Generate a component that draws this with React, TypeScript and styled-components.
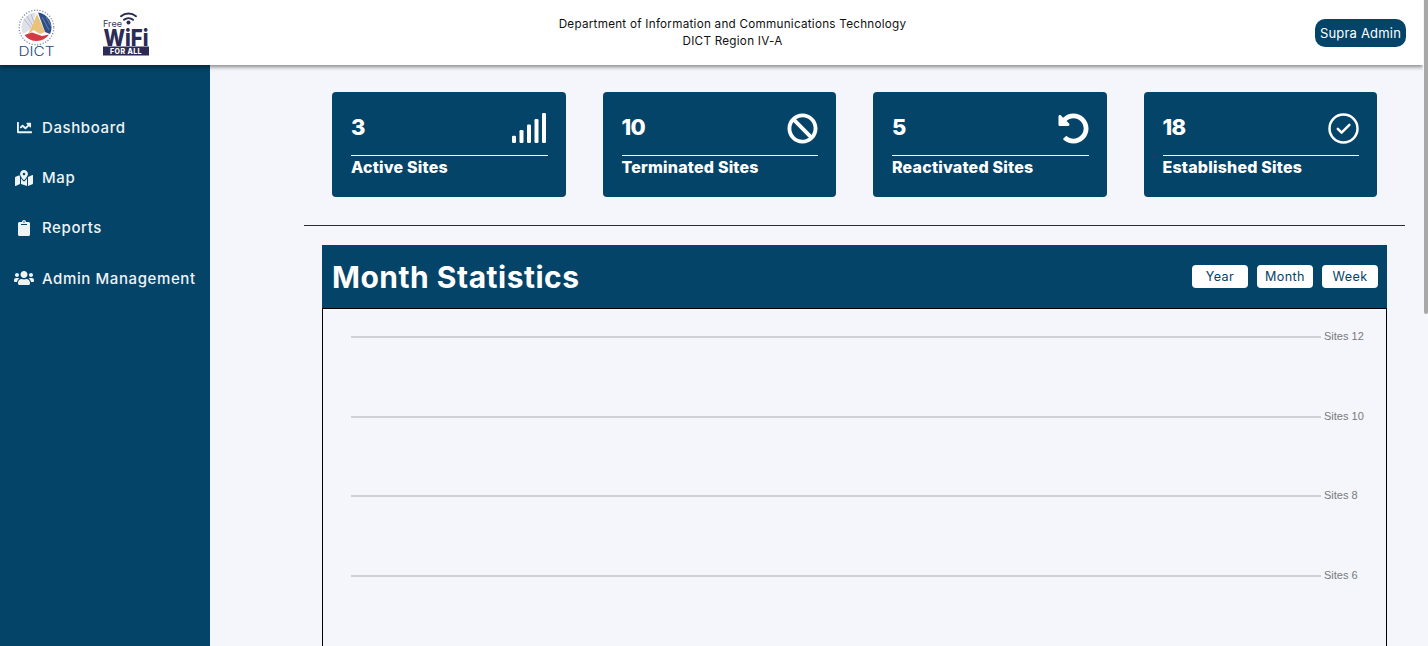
import { ReactNode } from "react";
import styled, { createGlobalStyle } from "styled-components";
import { FaBan, FaChartLine, FaClipboard, FaMapMarkedAlt, FaUndoAlt, FaUsers } from "react-icons/fa";

const navy = "#044468";
const pageBg = "#f4f6fb";

const GlobalStyle = createGlobalStyle`
  html, body {
    margin: 0;
    padding: 0;
    height: 100%;
    overflow: hidden;
    background: ${pageBg};
    font-family: "Inter", "Liberation Sans", sans-serif;
  }
  #root { height: 100%; }
  * { box-sizing: border-box; }
`;

const Viewport = styled.div`
  height: 646px;
  display: flex;
`;

const Page = styled.div`
  flex: 1;
  min-width: 0;
  overflow: hidden;
`;

const ScrollRail = styled.div`
  width: 5px;
  flex-shrink: 0;
  background: ${pageBg};
`;

const ScrollThumb = styled.div`
  height: 314px;
  margin-left: 1px;
  background: #a8a8a8;
  border-radius: 0 0 3px 3px;
`;

const Header = styled.header`
  position: relative;
  z-index: 2;
  height: 65px;
  background: #fff;
  box-shadow: 0 2px 4px rgba(0, 0, 0, 0.45);
  display: flex;
  align-items: center;
  justify-content: space-between;
  padding: 0 17px 0 18px;
`;

const Logos = styled.div`
  display: flex;
  align-items: center;
  gap: 47px;
`;

const HeaderTitle = styled.div`
  font-size: 11.7px;
  letter-spacing: 0.25px;
  line-height: 17px;
  text-align: center;
  color: #111;
`;

const UserBadge = styled.div`
  background: ${navy};
  color: #fff;
  font-size: 13px;
  letter-spacing: 0.2px;
  height: 28px;
  padding: 0 4px;
  width: 91px;
  justify-content: center;
  border-radius: 10px;
  display: flex;
  align-items: center;
`;

const Body = styled.div`
  display: flex;
  align-items: stretch;
`;

const Sidebar = styled.nav`
  width: 210px;
  flex-shrink: 0;
  background: ${navy};
  padding-top: 37px;
  display: flex;
  flex-direction: column;
`;

const NavItem = styled.a`
  height: 50.4px;
  display: flex;
  align-items: center;
  gap: 9px;
  padding-left: 15px;
  color: #eef3f6;
  font-size: 15px;
  letter-spacing: 0.6px;
  font-weight: 500;
`;

const NavIcon = styled.span<{ $size: number }>`
  width: 18px;
  flex-shrink: 0;
  display: flex;
  justify-content: center;

  svg {
    width: ${(p) => p.$size}px;
    height: ${(p) => p.$size}px;
    flex-shrink: 0;
  }
`;

const Main = styled.main`
  flex: 1;
  min-width: 0;
  padding: 27px 18px 0 94px;
`;

const Cards = styled.section`
  display: grid;
  grid-template-columns: repeat(4, 1fr);
  gap: 37px;
  padding: 0 28px;
`;

const Card = styled.article`
  height: 105px;
  background: ${navy};
  border-radius: 4px;
  color: #fff;
  padding: 19px 18px 0 19px;
`;

const CardTop = styled.div`
  height: 45px;
  display: flex;
  justify-content: space-between;
  align-items: flex-start;
  border-bottom: 1px solid #fff;
  padding-top: 1px;
`;

const CardValue = styled.div`
  font-size: 22px;
  font-weight: 800;
  letter-spacing: -0.8px;
  line-height: 30px;
`;

const CardIcon = styled.div`
  width: 31px;
  height: 31px;
  margin-top: 1px;

  svg { width: 100%; height: 100%; display: block; }
`;

const CardLabel = styled.div`
  font-size: 16px;
  font-weight: 800;
  letter-spacing: 0.2px;
  line-height: 22px;
`;

const Divider = styled.hr`
  border: 0;
  height: 1px;
  background: #2b2d36;
  margin: 28px 0 19px;
`;

const Panel = styled.section`
  margin: 0 18px;
`;

const PanelHead = styled.div`
  height: 63px;
  background: ${navy};
  display: flex;
  align-items: center;
  justify-content: space-between;
  padding: 0 9px 0 10px;
`;

const PanelTitle = styled.h2`
  margin: 0;
  color: #fff;
  font-size: 30px;
  letter-spacing: 0.5px;
  font-weight: 700;
`;

const RangeGroup = styled.div`
  display: flex;
  gap: 9px;
`;

const RangeButton = styled.button`
  width: 56px;
  height: 23px;
  padding: 0;
  border: 0;
  border-radius: 4px;
  background: #fff;
  color: ${navy};
  font-family: inherit;
  font-size: 12.6px;
  letter-spacing: 0.4px;
`;

const ChartBox = styled.div`
  height: 700px;
  border: 1px solid #000;
  padding: 27px 21px 0 28px;
`;

const GridRow = styled.div`
  height: 79.7px;
  display: flex;
  align-items: flex-start;
  gap: 3px;
`;

const GridLine = styled.div`
  flex: 1;
  height: 2px;
  background: #cfd1d6;
`;

const GridLabel = styled.span`
  width: 41px;
  margin-top: -6px;
  font-family: "Liberation Sans", Arial, sans-serif;
  font-size: 11px;
  line-height: 13px;
  color: #77797d;
`;

const SignalIcon = () => (
  <svg viewBox="0 0 31 31" fill="#fff" style={{ overflow: "visible" }}>
    <rect x="-5" y="22.7" width="4" height="7.3" rx="1.2" />
    <rect x="2.5" y="17" width="4" height="13" rx="1.2" />
    <rect x="10" y="11.4" width="4" height="18.6" rx="1.2" />
    <rect x="17.5" y="6" width="4" height="24" rx="1.2" />
    <rect x="25" y="0" width="4" height="30" rx="1.2" />
  </svg>
);

const CheckCircleIcon = () => (
  <svg viewBox="0 0 31 31" fill="none" stroke="#fff" strokeWidth="2.5" strokeLinecap="round" strokeLinejoin="round">
    <circle cx="15.5" cy="15.5" r="14" />
    <path d="M9.8 15.8 L13.6 19.6 L21.4 11.8" />
  </svg>
);

const DictLogo = () => (
  <svg width="38" height="48" viewBox="0 0 38 48" style={{ display: "block" }}>
    <circle cx="18.5" cy="18.5" r="17.3" fill="#fff" stroke="#8c93ad" strokeWidth="1.4" strokeDasharray="1.2 1.6" />
    <path d="M18 3.5 A15 15 0 0 0 5 25 L13 20 Z" fill="#dfe1e8" />
    <path d="M6 10 L15 21 M9 7 L16 19 M13 5 L17 16" stroke="#a9afc4" strokeWidth="0.8" />
    <path d="M20 3.5 A15 15 0 0 1 32 25 L27 23 Z" fill="#2e4f86" />
    <path d="M24 8 L31 21 M28 8 L33 17" stroke="#7f95bb" strokeWidth="0.7" />
    <path d="M19 5 L27 23 L22 25 L15.5 21 L9.5 26 L14 17 Z" fill="#e9c27c" />
    <path d="M6.5 26 L14 23.5 L24 27 L31 25.5 A15 15 0 0 1 6.5 26 Z" fill="#d23b45" />
    <text x="18.5" y="46.5" textAnchor="middle" fontFamily="Inter, sans-serif" fontSize="12.5" fontWeight="300" textLength="36" lengthAdjust="spacingAndGlyphs" fill="#2a4a80">DICT</text>
  </svg>
);

const WifiLogo = () => (
  <svg width="47" height="46" viewBox="0 0 47 46" style={{ display: "block", overflow: "visible" }}>
    <g fill="none" stroke="#2b2b55" strokeWidth="2" strokeLinecap="round">
      <path d="M18 6.2 A12 12 0 0 1 33 6.2" />
      <path d="M21 9.8 A7 7 0 0 1 30 9.8" />
    </g>
    <circle cx="25.5" cy="12.5" r="2" fill="#2b2b55" />
    <text x="0" y="16.5" fontFamily="Inter, sans-serif" fontSize="9" textLength="19" lengthAdjust="spacingAndGlyphs" fill="#3a3a5e">Free</text>
    <text x="0.5" y="36" fontFamily="Inter, sans-serif" fontSize="23" fontWeight="800" textLength="45" lengthAdjust="spacingAndGlyphs" fill="#2b2b55">WiFi</text>
    <rect x="0" y="36.5" width="46" height="9" fill="#2b2b55" />
    <text x="23" y="43.6" textAnchor="middle" fontFamily="Inter, sans-serif" fontSize="7" fontWeight="800" letterSpacing="0.4" fill="#fff">FOR ALL</text>
  </svg>
);

const navItems: { label: string; size: number; icon: ReactNode }[] = [
  { label: "Dashboard", size: 15, icon: <FaChartLine /> },
  { label: "Map", size: 18, icon: <FaMapMarkedAlt /> },
  { label: "Reports", size: 16, icon: <FaClipboard /> },
  { label: "Admin Management", size: 20, icon: <FaUsers /> },
];

const cards: { value: number; label: string; icon: ReactNode }[] = [
  { value: 3, label: "Active Sites", icon: <SignalIcon /> },
  { value: 10, label: "Terminated Sites", icon: <FaBan /> },
  { value: 5, label: "Reactivated Sites", icon: <FaUndoAlt /> },
  { value: 18, label: "Established Sites", icon: <CheckCircleIcon /> },
];

const App = () => {
  return (
    <Viewport>
      <GlobalStyle />
      <Page>
        <Header>
          <Logos>
            <DictLogo />
            <WifiLogo />
          </Logos>
          <HeaderTitle>
            Department of Information and Communications Technology
            <br />
            DICT Region IV-A
          </HeaderTitle>
          <UserBadge>Supra Admin</UserBadge>
        </Header>
        <Body>
          <Sidebar>
            {navItems.map((item) => (
              <NavItem key={item.label}>
                <NavIcon $size={item.size}>{item.icon}</NavIcon>
                {item.label}
              </NavItem>
            ))}
          </Sidebar>
          <Main>
            <Cards>
              {cards.map((card) => (
                <Card key={card.label}>
                  <CardTop>
                    <CardValue>{card.value}</CardValue>
                    <CardIcon>{card.icon}</CardIcon>
                  </CardTop>
                  <CardLabel>{card.label}</CardLabel>
                </Card>
              ))}
            </Cards>
            <Divider />
            <Panel>
              <PanelHead>
                <PanelTitle>Month Statistics</PanelTitle>
                <RangeGroup>
                  <RangeButton>Year</RangeButton>
                  <RangeButton>Month</RangeButton>
                  <RangeButton>Week</RangeButton>
                </RangeGroup>
              </PanelHead>
              <ChartBox>
                {[12, 10, 8, 6].map((n) => (
                  <GridRow key={n}>
                    <GridLine />
                    <GridLabel>Sites {n}</GridLabel>
                  </GridRow>
                ))}
              </ChartBox>
            </Panel>
          </Main>
        </Body>
      </Page>
      <ScrollRail>
        <ScrollThumb />
      </ScrollRail>
    </Viewport>
  );
};

export default App;
